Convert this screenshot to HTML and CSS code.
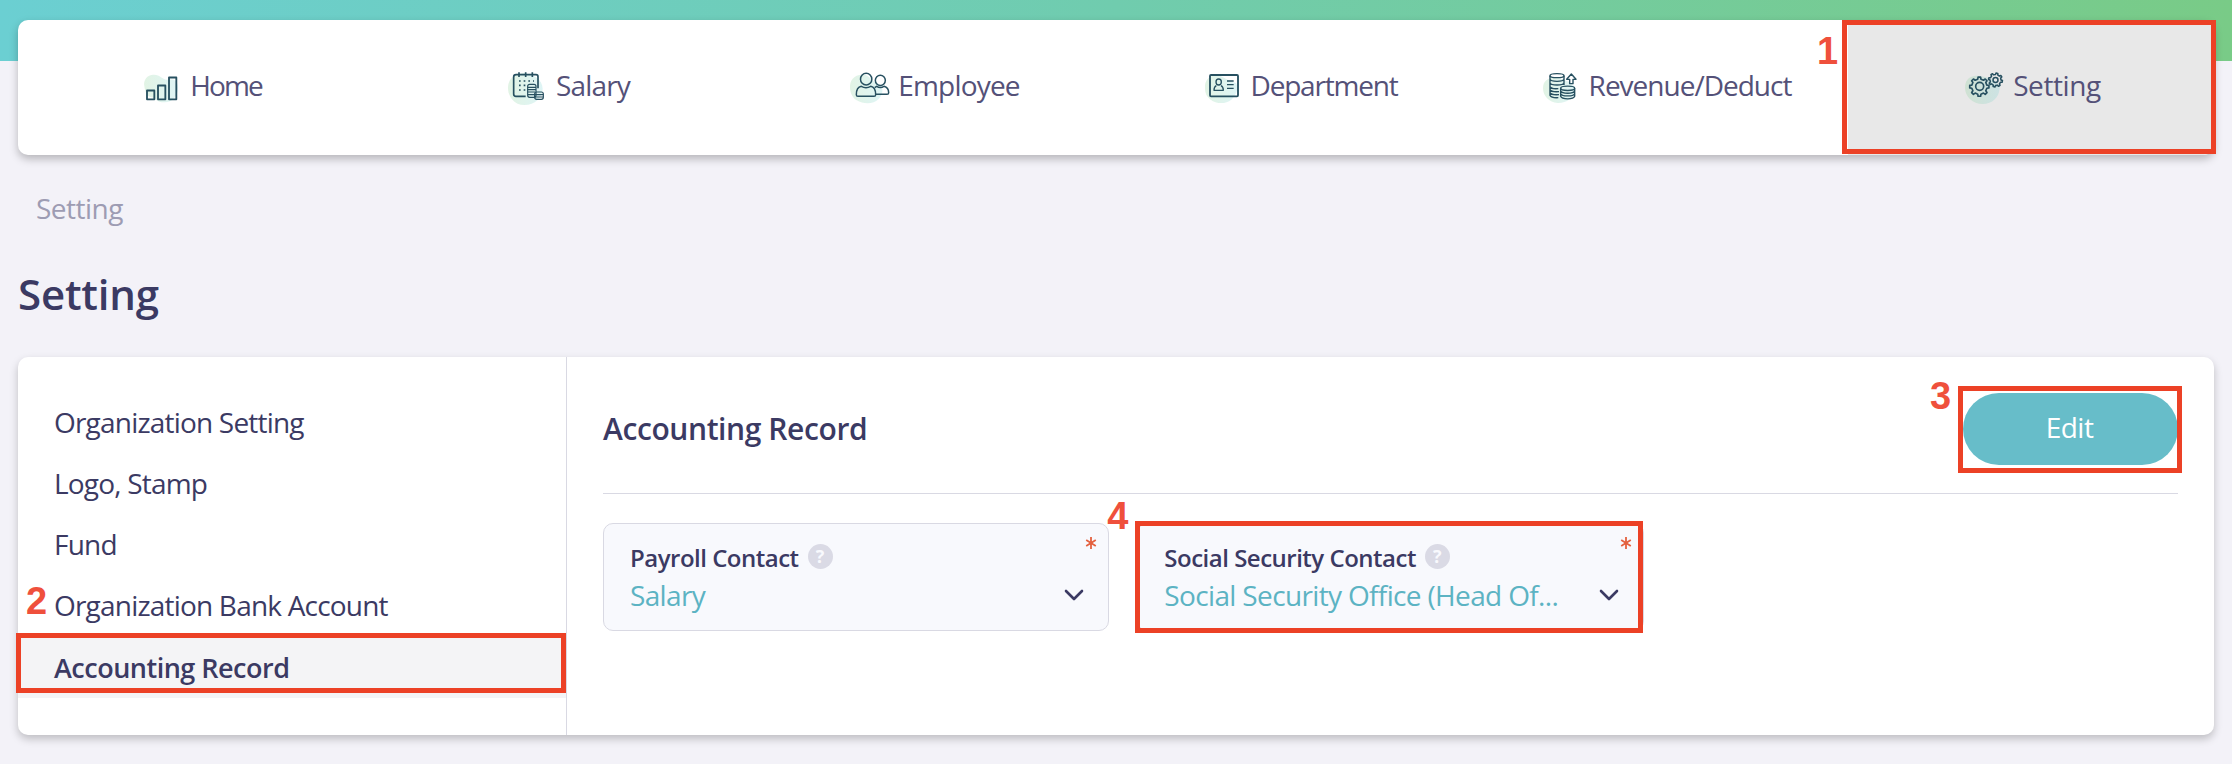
FILE: index.html
```html
<!DOCTYPE html>
<html lang="en">
<head>
  <meta charset="UTF-8">
  <title>Setting</title>
  <link rel="stylesheet" href="styles.css">
</head>
<body>
  <svg width="0" height="0" class="defs">
    <defs>
      <linearGradient id="mint" x1="0" y1="0" x2="1" y2="0">
        <stop offset="0" stop-color="#7acb87" stop-opacity=".22"/>
        <stop offset="1" stop-color="#6bcfd2" stop-opacity=".22"/>
      </linearGradient>
      <path id="gear" d="M22.5-4.8 28.8-3.8V3.8L22.5 4.8 19.3 12.5 23 17.7 17.7 23 12.5 19.3 4.8 22.5 3.8 28.8H-3.8L-4.8 22.5-12.5 19.3-17.7 23-23 17.7-19.3 12.5-22.5 4.8-28.8 3.8V-3.8L-22.5-4.8-19.3-12.5-23-17.7-17.7-23-12.5-19.3-4.8-22.5-3.8-28.8H3.8L4.8-22.5 12.5-19.3 17.7-23 23-17.7 19.3-12.5Z"/>
    </defs>
  </svg>

  <header class="topbar">
    <nav class="nav">
      <a class="nav-item home">
        <svg class="icon" viewBox="30 15 138 120">
          <path class="blob" d="M43 76C39 57 52 41 70 41 91 40 95 55 111 56 130 51 144 58 144 80 144 104 127 124 104 124 82 125 76 111 62 108 50 106 45 90 43 76Z"/>
          <g stroke-width="5.500"><path d="M51 88.500H73V115H51ZM84 73.500H106V115H84ZM117 49.500H139V115H117Z"/></g>
        </svg>
        <span>Home</span>
      </a>
      <a class="nav-item">
        <svg class="icon" viewBox="39 15 144 120">
          <path class="blob" d="M51 80C51 56 67 40 96 36 128 42 154 53 155 84 154 110 132 132 100 132 70 132 51 107 51 80Z"/>
          <path d="M104 106H75Q68 106 68 99V48Q68 41 75 41H135Q141 41 141 47V82" stroke-width="5"/>
          <path d="M84 34V48M104 34V48M124 34V48" stroke-width="5"/>
          <path d="M84 60H129M84 73H108M84 87H104" stroke-width="5" stroke-dasharray="5 9"/>
          <g stroke-width="3.500">
            <rect x="110" y="70" width="25" height="39" rx="6"/>
            <path d="M110 79H135M110 86H135M110 93H132M110 101H131"/>
            <rect x="131" y="93" width="26" height="22" rx="6"/>
            <path d="M131 101H157M131 108H157"/>
          </g>
        </svg>
        <span>Salary</span>
      </a>
      <a class="nav-item">
        <svg class="icon" viewBox="15 15 144 120">
          <path class="blob" d="M27 80C26 56 40 42 62 41 82 38 89 58 106 65 130 73 129 98 112 115 97 131 67 130 47 118 33 108 28 96 27 80Z"/>
          <g stroke-width="4.500">
            <ellipse cx="75.500" cy="54.500" rx="17" ry="17.500"/>
            <ellipse cx="118" cy="58" rx="15" ry="15.500"/>
            <path d="M61 76C50 78 46 87 46 101Q46 106 51 106H99Q104 106 104 101C104 87 100 78 89 76Q75 84 61 76Z"/>
            <path d="M101 80 107 76Q118 83 129 76C139 79 143 86 143 95Q143 100 138 100H105"/>
          </g>
        </svg>
        <span>Employee</span>
      </a>
      <a class="nav-item department">
        <svg class="icon" viewBox="1083 15 138 120">
          <path class="blob" d="M1095 80C1094 60 1105 45 1128 41 1150 44 1164 61 1188 66 1198 80 1188 103 1174 116 1157 130 1129 129 1112 116 1100 107 1095 96 1095 80Z"/>
          <rect x="1110" y="42" width="84" height="64" rx="3" stroke-width="5.500"/>
          <g stroke-width="4">
            <ellipse cx="1136" cy="63" rx="8" ry="9"/>
            <path d="M1129 74Q1122 77 1122 88H1150Q1150 77 1143 74"/>
            <path d="M1161 60H1181M1161 71H1181M1161 82H1181"/>
          </g>
        </svg>
        <span>Department</span>
      </a>
      <a class="nav-item revenue">
        <svg class="icon" viewBox="26 15 138 120">
          <path class="blob" d="M38 82C38 62 50 51 76 49 98 55 135 65 135 88 130 112 108 127 82 126 56 124 38 105 38 82Z"/>
          <g stroke-width="4.200">
            <ellipse cx="80" cy="44" rx="21" ry="6"/>
            <path d="M59 44V103C62 108 72 111 84 110M101 44V72M59 55C62 63 98 63 101 55M59 66C62 74 98 74 101 66M59 77C62 83 74 84 84 83M59 86C62 92 74 93 86 92M59 95C62 101 74 102 86 101"/>
            <ellipse cx="112" cy="82" rx="21" ry="6.500"/>
            <path d="M91 82V106C95 116 129 116 133 106V82M91 90C95 99 129 99 133 90M91 98C95 107 129 107 133 98"/>
            <path d="M123 39 137 55H128V68H118V55H109Z"/>
          </g>
        </svg>
        <span>Revenue/Deduct</span>
      </a>
      <a class="nav-item active">
        <svg class="icon" viewBox="31 15 144 120">
          <path class="blob" d="M43 80C43 60 53 46 75 44 100 44 147 56 147 82 145 110 125 129 96 129 66 129 43 107 43 80Z"/>
          <g stroke-width="5">
            <use href="#gear" transform="translate(86 77)"/>
            <circle cx="87" cy="76" r="12"/>
          </g>
          <use href="#gear" transform="translate(134.500 57) rotate(12) scale(.72)" stroke-width="6.500"/>
          <circle cx="134.500" cy="57" r="7.500" stroke-width="4.500"/>
        </svg>
        <span>Setting</span>
      </a>
    </nav>
    <span class="step step-1">1</span>
  </header>

  <main>
    <div class="breadcrumb">Setting</div>
    <h1>Setting</h1>

    <div class="card">
      <aside class="sidebar">
        <a>Organization Setting</a>
        <a>Logo, Stamp</a>
        <a>Fund</a>
        <a>Organization Bank Account</a>
        <a class="selected">Accounting Record<span class="step step-2">2</span></a>
      </aside>

      <section class="content">
        <div class="content-head">
          <h2>Accounting Record</h2>
          <div class="edit-wrap">
            <button class="edit">Edit</button>
            <span class="step step-3">3</span>
          </div>
        </div>

        <div class="fields">
          <div class="field">
            <div class="label">Payroll Contact <span class="help">?</span></div>
            <div class="value">
              <span>Salary</span>
              <svg class="chevron" viewBox="0 0 20 12"><path d="M2 2 10 10 18 2"/></svg>
            </div>
            <svg class="required" viewBox="0 0 12 14"><path d="M6 1V13M1.200 4 10.800 10M10.800 4 1.200 10"/></svg>
          </div>
          <div class="field marked">
            <div class="label">Social Security Contact <span class="help">?</span></div>
            <div class="value">
              <span>Social Security Office (Head Of...</span>
              <svg class="chevron" viewBox="0 0 20 12"><path d="M2 2 10 10 18 2"/></svg>
            </div>
            <svg class="required" viewBox="0 0 12 14"><path d="M6 1V13M1.200 4 10.800 10M10.800 4 1.200 10"/></svg>
            <span class="step step-4">4</span>
          </div>
        </div>
      </section>
    </div>
  </main>
</body>
</html>
```
FILE: styles.css
```css
* {
  box-sizing: border-box;
}

body {
  margin: 0;
  height: 764px;
  overflow: hidden;
  font-family: "Open Sans", "Noto Sans", sans-serif;
  font-size: 28px;
  letter-spacing: -0.8px;
  color: #3b3a63;
  background: #f3f2f8;
}

.defs {
  display: block;
}

/* top menu */
.topbar {
  position: relative;
  padding: 20px 18px 0;
  background: linear-gradient(to right, #6bcfd2, #70ccae 50%, #79cb87) no-repeat;
  background-size: 100% 61px;
}

.nav {
  display: grid;
  grid-template-columns: repeat(6, 1fr);
  height: 135px;
  background: #fff;
  border-radius: 10px;
  box-shadow: 0 4px 8px rgba(0, 0, 0, 0.25);
}

.nav-item {
  position: relative;
  display: flex;
  align-items: center;
  justify-content: center;
  padding-bottom: 4px;
  line-height: 40px;
  color: #545178;
}

.nav-item span {
  margin-top: -2px;
}

.nav-item.home {
  letter-spacing: -1.9px;
}

.nav-item.department {
  letter-spacing: -1.2px;
}

.nav-item.revenue {
  letter-spacing: -1px;
}

.nav-item.active {
  letter-spacing: -0.4px;
  background: #e8e8e8;
  border-radius: 0 10px 10px 0;
}

.icon {
  height: 40px;
  margin-right: 4px;
  fill: none;
  stroke: #275060;
  stroke-linejoin: round;
}

.blob {
  fill: url(#mint);
  stroke: none;
}

/* red tutorial frames and step numbers */
.nav-item.active::after,
.selected::after,
.edit-wrap::after,
.marked::after {
  content: "";
  position: absolute;
  border: 5px solid #ec4126;
}

.nav-item.active::after {
  inset: 0 -2px 1px -6px;
}

.step {
  position: absolute;
  font: bold 38px/38px "Liberation Sans", Arial, sans-serif;
  letter-spacing: 0;
  color: #ef503c;
}

.step-1 {
  left: 1817px;
  top: 32px;
}

.step-2 {
  left: 8px;
  top: -54px;
}

.step-3 {
  left: -33px;
  top: -16px;
}

.step-4 {
  left: -31px;
  top: -27px;
}

/* page */
main {
  padding: 0 18px;
}

.breadcrumb {
  margin: 33px 0 0 18px;
  line-height: 40px;
  letter-spacing: -0.5px;
  color: #9d9cb3;
}

h1 {
  margin: 36px 0 0;
  font-size: 42px;
  font-weight: 600;
  line-height: 60px;
  letter-spacing: -0.2px;
}

.card {
  display: flex;
  height: 378px;
  margin-top: 33px;
  background: #fff;
  border-radius: 10px;
  box-shadow: 0 4px 8px rgba(0, 0, 0, 0.22);
}

.sidebar {
  width: 549px;
  padding-top: 35px;
  border-right: 1px solid #d9d9e3;
}

.sidebar a {
  display: block;
  height: 61px;
  padding-left: 36px;
  line-height: 61px;
}

.sidebar .selected {
  position: relative;
  height: 62px;
  font-size: 27px;
  font-weight: 600;
  line-height: 64px;
  letter-spacing: -0.5px;
  background: #f4f4f6;
}

.selected::after {
  inset: -3px 0 5px -2px;
}

.content {
  flex: 1;
  padding: 36px 36px 0;
}

.content-head {
  display: flex;
  justify-content: space-between;
  height: 101px;
  border-bottom: 1px solid #d9d9e3;
}

h2 {
  margin: 0;
  font-size: 30px;
  font-weight: 600;
  line-height: 71px;
  letter-spacing: -0.4px;
}

.edit-wrap {
  position: relative;
  height: 72px;
}

.edit-wrap::after {
  inset: -7px -4px -8px -5px;
}

.edit {
  width: 215px;
  height: 72px;
  padding: 0 2px 4px 0;
  border: none;
  border-radius: 36px;
  font: inherit;
  letter-spacing: -0.5px;
  color: #fff;
  background: #67bdc9;
}

.fields {
  display: grid;
  grid-template-columns: repeat(3, 1fr);
  gap: 28px;
  margin-top: 29px;
}

.field {
  position: relative;
  height: 108px;
  padding: 16px 24px 0 26px;
  background: #f8f9fd;
  border: 1px solid #d9d9e3;
  border-radius: 10px;
}

.marked::after {
  inset: -3px 0 -3px -3px;
}

.label {
  display: flex;
  align-items: center;
  gap: 9px;
  height: 34px;
  font-size: 24px;
  font-weight: 600;
  letter-spacing: -0.5px;
}

.help {
  width: 25px;
  height: 25px;
  margin-bottom: 2px;
  border-radius: 50%;
  font-size: 18px;
  font-weight: 700;
  line-height: 25px;
  letter-spacing: 0;
  text-align: center;
  color: #f8f9fd;
  background: #dadae5;
}

.value {
  display: flex;
  align-items: center;
  justify-content: space-between;
  height: 42px;
  letter-spacing: -0.65px;
  color: #5cb3c3;
}

.chevron {
  width: 20px;
  height: 12px;
  fill: none;
  stroke: #3b3a63;
  stroke-width: 2.6;
  stroke-linecap: round;
  stroke-linejoin: round;
}

.required {
  position: absolute;
  top: 12px;
  right: 11px;
  width: 12px;
  height: 14px;
  stroke: #e4613f;
  stroke-width: 1.8;
}
```
